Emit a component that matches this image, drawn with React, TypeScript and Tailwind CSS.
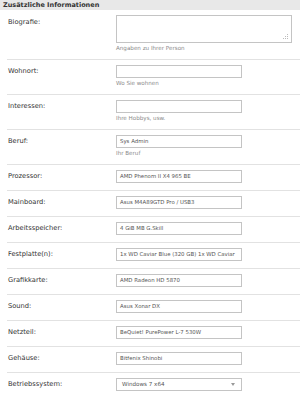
import React from 'react';

type Field = {
    label: string;
    value?: string;
    hint?: string;
};

const fields: Field[] = [
    { label: 'Wohnort:', hint: 'Wo Sie wohnen' },
    { label: 'Interessen:', hint: 'Ihre Hobbys, usw.' },
    { label: 'Beruf:', value: 'Sys Admin', hint: 'Ihr Beruf' },
    { label: 'Prozessor:', value: 'AMD Phenom II X4 965 BE' },
    { label: 'Mainboard:', value: 'Asus M4A89GTD Pro / USB3' },
    { label: 'Arbeitsspeicher:', value: '4 GiB MB G.Skill' },
    { label: 'Festplatte(n):', value: '1x WD Caviar Blue (320 GB) 1x WD Caviar' },
    { label: 'Grafikkarte:', value: 'AMD Radeon HD 5870' },
    { label: 'Sound:', value: 'Asus Xonar DX' },
    { label: 'Netzteil:', value: 'BeQuiet! PurePower L-7 530W' },
    { label: 'Gehäuse:', value: 'Bitfenix Shinobi' },
];

function Label({ children }: { children: React.ReactNode }) {
    return (
        <div className="w-[109px] shrink-0 pl-[1px] text-[6.7px] leading-[13px] text-[#333]">
            {children}
        </div>
    );
}

function Hint({ children }: { children: React.ReactNode }) {
    return <div className="text-[5.6px] leading-[10px] text-[#8a8a8a]">{children}</div>;
}

export default function App() {
    return (
        <div className="w-[300px] h-[397px] overflow-hidden bg-white font-['DejaVu_Sans',sans-serif]">
            {/* Kopfzeile */}
            <div className="h-[10px] bg-[#e8e8e8] pl-[3px] text-[6.5px] leading-[10px] font-bold text-[#333]">
                Zusätzliche Informationen
            </div>

            <div className="ml-[7px]">
                {/* Biografie */}
                <div className="flex pt-[5px] pb-[6px]">
                    <div className="w-[109px] shrink-0 pl-[1px] pt-[1px] text-[6.7px] leading-[13px] text-[#333]">
                        Biografie:
                    </div>
                    <div>
                        <div className="relative w-[176px] h-[28px] border border-[#c4c4c4] bg-white">
                            <svg className="absolute right-[2px] bottom-[2px]" width="6" height="6" viewBox="0 0 6 6">
                                <rect x="4" y="0" width="1" height="1" fill="#bbb" />
                                <rect x="2" y="2" width="1" height="1" fill="#bbb" />
                                <rect x="4" y="2" width="1" height="1" fill="#bbb" />
                                <rect x="0" y="4" width="1" height="1" fill="#bbb" />
                                <rect x="2" y="4" width="1" height="1" fill="#bbb" />
                                <rect x="4" y="4" width="1" height="1" fill="#bbb" />
                            </svg>
                        </div>
                        <Hint>Angaben zu Ihrer Person</Hint>
                    </div>
                </div>

                {fields.map((f) => (
                    <div
                        key={f.label}
                        className={`flex border-t border-[#e2e2e2] pt-[5px] ${f.hint ? 'pb-[6px]' : 'pb-[7px]'}`}
                    >
                        <Label>{f.label}</Label>
                        <div>
                            <div className="w-[126px] h-[13px] border border-[#c4c4c4] bg-white pl-[3px] pr-[2px] overflow-hidden whitespace-nowrap text-[5.4px] leading-[11px] text-[#555]">
                                {f.value}
                            </div>
                            {f.hint && <Hint>{f.hint}</Hint>}
                        </div>
                    </div>
                ))}

                {/* Betriebssystem */}
                <div className="flex border-t border-[#e2e2e2] pt-[5px] pb-[7px]">
                    <Label>Betriebssystem:</Label>
                    <div className="w-[126px] h-[13px] border border-[#c4c4c4] bg-white pl-[5px] pr-[6px] flex items-center justify-between text-[5.6px] text-[#555]">
                        <span>Windows 7 x64</span>
                        <svg width="4" height="3" viewBox="0 0 4 3">
                            <path d="M0 0h4L2 3z" fill="#999" />
                        </svg>
                    </div>
                </div>
            </div>
        </div>
    );
}
